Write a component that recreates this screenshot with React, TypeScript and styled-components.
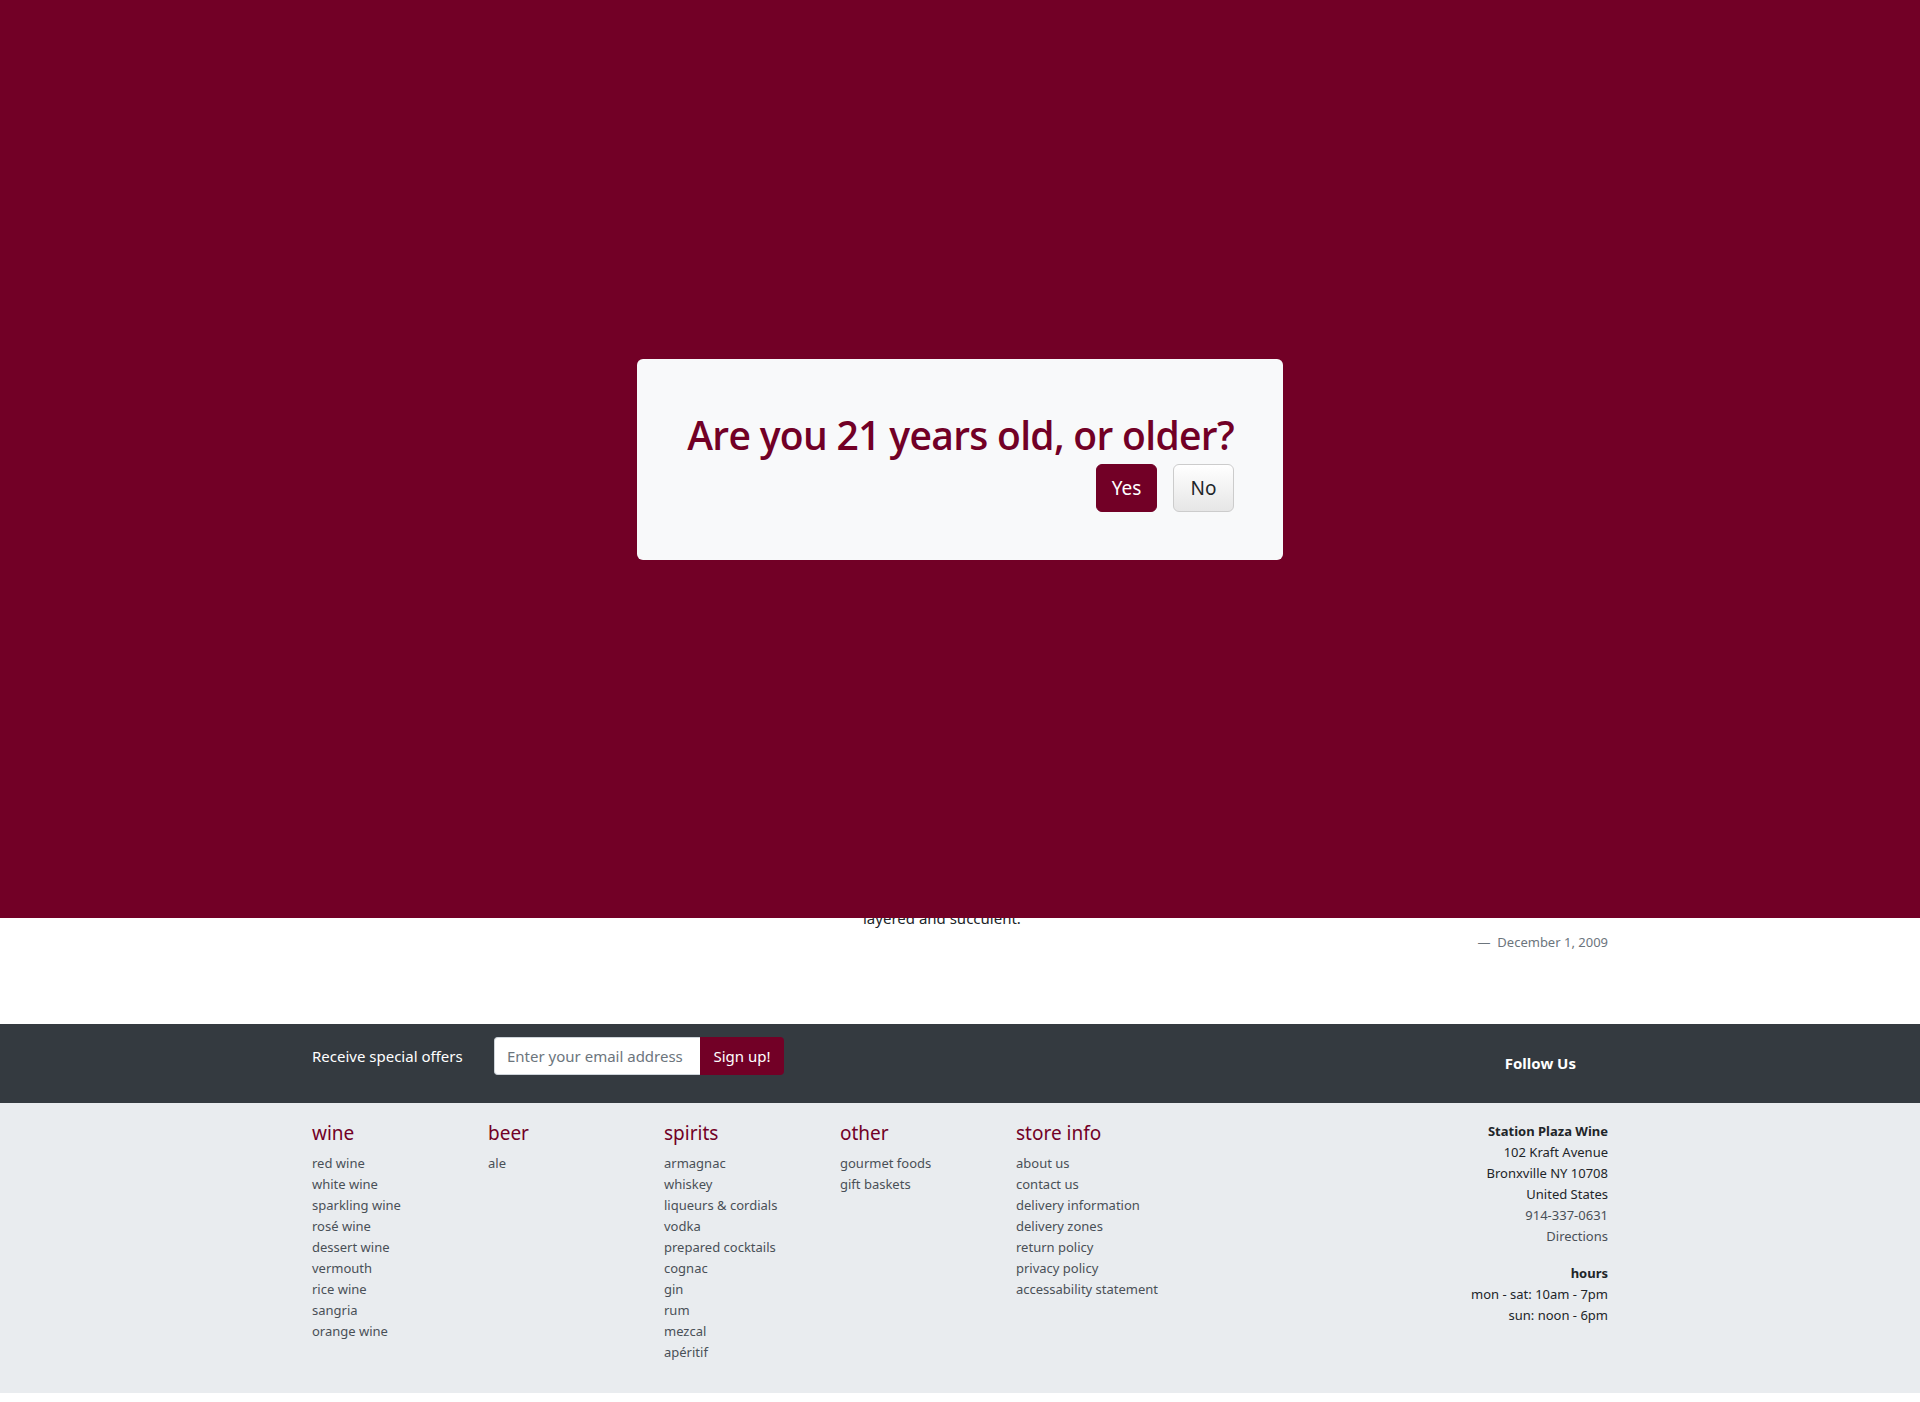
import React from "react";
import styled, { createGlobalStyle } from "styled-components";

const MAROON = "#720026";

const GlobalStyle = createGlobalStyle`
  html, body { margin: 0; padding: 0; background: #ffffff; }
  body {
    font-family: "Noto Sans", "Open Sans", sans-serif;
    color: #212529;
    -webkit-font-smoothing: antialiased;
  }
  * { box-sizing: border-box; }
`;

const Page = styled.div`
  position: relative;
  width: 1920px;
  min-height: 1402px;
  display: flex;
  flex-direction: column;
`;

const Container = styled.div`
  width: 1296px;
  margin: 0 auto;
`;

const Main = styled.main`
  height: 1024px;
  display: flex;
  flex-direction: column;
  justify-content: flex-end;
  padding-bottom: 71px;
`;

const Quote = styled.blockquote`
  margin: 0;
  display: flex;
  flex-direction: column;
`;

const QuoteText = styled.p`
  margin: 0 0 2px 551px;
  font-size: 15px;
  line-height: 24px;
  color: #212529;
`;

const QuoteDate = styled.footer`
  align-self: flex-end;
  font-size: 13px;
  line-height: 21px;
  color: #6c757d;
  &::before { content: "\\2014\\00A0\\00A0"; }
`;

const SignupBar = styled.section`
  background: #343a40;
  height: 79px;
`;

const SignupInner = styled(Container)`
  display: flex;
  align-items: flex-start;
  padding-top: 13px;
  height: 100%;
`;

const SignupLabel = styled.span`
  flex: 0 0 182px;
  color: #ffffff;
  font-size: 15px;
  line-height: 38px;
`;

const InputGroup = styled.form`
  display: flex;
  height: 38px;
`;

const EmailInput = styled.input`
  width: 206px;
  height: 38px;
  border: 1px solid #ced4da;
  border-right: none;
  border-radius: 4px 0 0 4px;
  padding: 0 12px;
  font-family: inherit;
  font-size: 15px;
  color: #212529;
  background: #ffffff;
  outline: none;
  &::placeholder { color: #6c757d; opacity: 1; }
`;

const SignupButton = styled.button`
  width: 84px;
  height: 38px;
  border: none;
  border-radius: 0 4px 4px 0;
  background: ${MAROON};
  color: #ffffff;
  font-family: inherit;
  font-size: 15px;
  padding: 0;
`;

const FollowUs = styled.h5`
  margin: 0 32px 0 auto;
  padding-top: 16px;
  color: #ffffff;
  font-size: 15px;
  font-weight: 700;
  line-height: 21px;
`;

const LinksSection = styled.footer`
  background: #e9ecef;
  padding: 18px 0 30px;
`;

const LinksInner = styled(Container)`
  display: flex;
  align-items: flex-start;
`;

const LinkColumns = styled.div`
  width: 880px;
  display: grid;
  grid-template-columns: repeat(5, 176px);
`;

const LinkColumn = styled.div`
  display: flex;
  flex-direction: column;
`;

const ColumnTitle = styled.h5`
  margin: 0 0 8px;
  font-size: 19px;
  font-weight: 400;
  line-height: 24px;
  color: ${MAROON};
`;

const FooterLink = styled.a`
  font-size: 13px;
  line-height: 21px;
  color: #495057;
  text-decoration: none;
`;

const StoreInfo = styled.address`
  margin-left: auto;
  font-style: normal;
  text-align: right;
  display: flex;
  flex-direction: column;
  padding-top: 0;
`;

const InfoBlock = styled.div<{ $gap?: number }>`
  display: flex;
  flex-direction: column;
  margin-bottom: ${(p) => p.$gap ?? 0}px;
`;

const InfoLine = styled.span<{ $bold?: boolean; $muted?: boolean }>`
  font-size: 13px;
  line-height: 21px;
  font-weight: ${(p) => (p.$bold ? 700 : 400)};
  color: ${(p) => (p.$muted ? "#495057" : "#212529")};
`;

const BottomStrip = styled.div`
  height: 9px;
  background: #ffffff;
`;

const Overlay = styled.div`
  position: absolute;
  top: 0;
  left: 0;
  width: 100%;
  height: 918px;
  background: ${MAROON};
  display: flex;
  align-items: center;
  justify-content: center;
  padding-top: 1px;
`;

const Modal = styled.div`
  width: 646px;
  height: 201px;
  background: #f8f9fa;
  border-radius: 6px;
  padding: 52px 49px 0;
  display: flex;
  flex-direction: column;
  align-items: flex-end;
`;

const ModalTitle = styled.h1`
  margin: 0 0 5px;
  font-family: "Open Sans", "Noto Sans", sans-serif;
  font-size: 39px;
  font-weight: 600;
  line-height: 48px;
  color: ${MAROON};
  white-space: nowrap;
  letter-spacing: -0.68px;
`;

const ButtonRow = styled.div`
  display: flex;
  gap: 16px;
`;

const AgeButton = styled.button<{ $primary?: boolean }>`
  height: 48px;
  padding: 0 14px;
  min-width: 61px;
  font-family: inherit;
  font-size: 19px;
  border-radius: 6px;
  border: 1px solid ${(p) => (p.$primary ? MAROON : "#cccccc")};
  background: ${(p) =>
    p.$primary ? MAROON : "linear-gradient(#ffffff, #e6e6e6)"};
  color: ${(p) => (p.$primary ? "#ffffff" : "#212529")};
`;

const columns: { title: string; links: string[] }[] = [
  {
    title: "wine",
    links: [
      "red wine",
      "white wine",
      "sparkling wine",
      "rosé wine",
      "dessert wine",
      "vermouth",
      "rice wine",
      "sangria",
      "orange wine",
    ],
  },
  { title: "beer", links: ["ale"] },
  {
    title: "spirits",
    links: [
      "armagnac",
      "whiskey",
      "liqueurs & cordials",
      "vodka",
      "prepared cocktails",
      "cognac",
      "gin",
      "rum",
      "mezcal",
      "apéritif",
    ],
  },
  { title: "other", links: ["gourmet foods", "gift baskets"] },
  {
    title: "store info",
    links: [
      "about us",
      "contact us",
      "delivery information",
      "delivery zones",
      "return policy",
      "privacy policy",
      "accessability statement",
    ],
  },
];

export default function App() {
  return (
    <>
      <GlobalStyle />
      <Page>
        <Main>
          <Container>
            <Quote>
              <QuoteText>layered and succulent.</QuoteText>
              <QuoteDate>December 1, 2009</QuoteDate>
            </Quote>
          </Container>
        </Main>

        <SignupBar>
          <SignupInner>
            <SignupLabel>Receive special offers</SignupLabel>
            <InputGroup onSubmit={(e) => e.preventDefault()}>
              <EmailInput type="email" placeholder="Enter your email address" />
              <SignupButton type="submit">Sign up!</SignupButton>
            </InputGroup>
            <FollowUs>Follow Us</FollowUs>
          </SignupInner>
        </SignupBar>

        <LinksSection>
          <LinksInner>
            <LinkColumns>
              {columns.map((c) => (
                <LinkColumn key={c.title}>
                  <ColumnTitle>{c.title}</ColumnTitle>
                  {c.links.map((l) => (
                    <FooterLink key={l} href="#">
                      {l}
                    </FooterLink>
                  ))}
                </LinkColumn>
              ))}
            </LinkColumns>
            <StoreInfo>
              <InfoBlock $gap={16}>
                <InfoLine $bold>Station Plaza Wine</InfoLine>
                <InfoLine>102 Kraft Avenue</InfoLine>
                <InfoLine>Bronxville NY 10708</InfoLine>
                <InfoLine>United States</InfoLine>
                <InfoLine $muted>914-337-0631</InfoLine>
                <InfoLine $muted>Directions</InfoLine>
              </InfoBlock>
              <InfoBlock>
                <InfoLine $bold>hours</InfoLine>
                <InfoLine>mon - sat: 10am - 7pm</InfoLine>
                <InfoLine>sun: noon - 6pm</InfoLine>
              </InfoBlock>
            </StoreInfo>
          </LinksInner>
        </LinksSection>
        <BottomStrip />

        <Overlay>
          <Modal role="dialog" aria-modal="true">
            <ModalTitle>Are you 21 years old, or older?</ModalTitle>
            <ButtonRow>
              <AgeButton $primary>Yes</AgeButton>
              <AgeButton>No</AgeButton>
            </ButtonRow>
          </Modal>
        </Overlay>
      </Page>
    </>
  );
}
